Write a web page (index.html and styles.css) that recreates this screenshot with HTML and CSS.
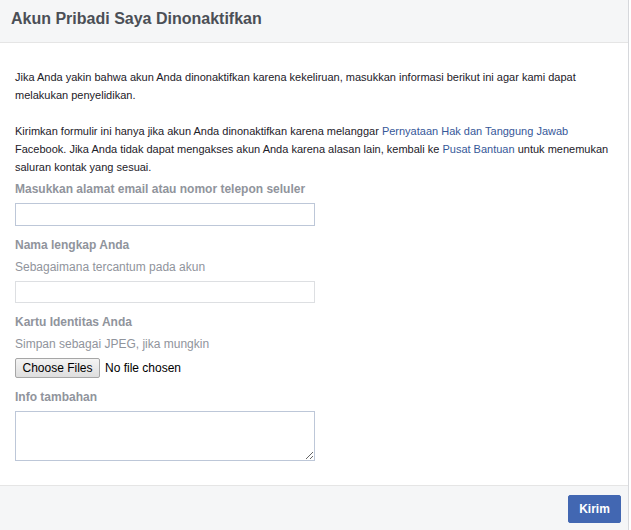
FILE: index.html
```html
<!DOCTYPE html>
<html lang="id">
<head>
<meta charset="utf-8">
<title>Akun Pribadi Saya Dinonaktifkan</title>
<link rel="stylesheet" href="styles.css">
</head>
<body>
<div class="dialog">
  <div class="dialog-header">
    <h2 class="dialog-title">Akun Pribadi Saya Dinonaktifkan</h2>
  </div>
  <div class="dialog-body">
    <p class="intro">Jika Anda yakin bahwa akun Anda dinonaktifkan karena kekeliruan, masukkan informasi berikut ini agar kami dapat melakukan penyelidikan.</p>
    <p class="intro intro-last">Kirimkan formulir ini hanya jika akun Anda dinonaktifkan karena melanggar <a class="link" href="#">Pernyataan Hak dan Tanggung Jawab</a> Facebook. Jika Anda tidak dapat mengakses akun Anda karena alasan lain, kembali ke <a class="link" href="#">Pusat Bantuan</a> untuk menemukan saluran kontak yang sesuai.</p>

    <div class="field">
      <label class="field-label">Masukkan alamat email atau nomor telepon seluler</label>
      <input class="text-input" type="text">
    </div>

    <div class="field">
      <label class="field-label">Nama lengkap Anda</label>
      <div class="field-hint">Sebagaimana tercantum pada akun</div>
      <input class="text-input text-input-light" type="text">
    </div>

    <div class="field">
      <label class="field-label">Kartu Identitas Anda</label>
      <div class="field-hint">Simpan sebagai JPEG, jika mungkin</div>
      <div class="file-row">
        <button class="file-button" type="button">Choose Files</button>
        <span class="file-status">No file chosen</span>
      </div>
    </div>

    <div class="field field-last">
      <label class="field-label">Info tambahan</label>
      <textarea class="text-area"></textarea>
    </div>
  </div>
  <div class="dialog-footer">
    <button class="submit-button" type="button">Kirim</button>
  </div>
</div>
</body>
</html>
```
FILE: styles.css
```css
html, body {
  margin: 0;
  padding: 0;
  background: #ffffff;
}

body {
  font-family: "Liberation Sans", Arial, Helvetica, sans-serif;
  font-size: 12px;
  color: #1d2129;
}

.dialog {
  width: 628px;
  height: 530px;
  border-right: 1px solid #d6d8dc;
  display: flex;
  flex-direction: column;
  box-sizing: content-box;
}

.dialog-header {
  height: 43px;
  box-sizing: border-box;
  background: #f5f6f7;
  border-bottom: 1px solid #e5e5e5;
  padding: 9px 11px 0;
}

.dialog-title {
  margin: 0;
  font-size: 16px;
  line-height: 19px;
  font-weight: bold;
  color: #4b4f56;
}

.dialog-body {
  flex: 1;
  padding: 25px 15px 0;
}

.intro {
  margin: 0 0 18px;
  font-size: 11px;
  line-height: 18px;
}

.intro-last {
  margin-bottom: 4px;
}

.link {
  color: #365899;
  text-decoration: none;
}

.field {
  display: flex;
  flex-direction: column;
  align-items: flex-start;
  margin-bottom: 10px;
}

.field-last {
  margin-bottom: 0;
}

.field-label {
  font-weight: bold;
  color: #90949c;
  line-height: 18px;
  margin-bottom: 5px;
}

.field-hint {
  color: #90949c;
  line-height: 18px;
  margin-top: -1px;
  margin-bottom: 5px;
}

.text-input {
  width: 300px;
  height: 23px;
  box-sizing: border-box;
  margin: 0;
  border: 1px solid #bdc7d8;
  padding: 3px;
  font-family: inherit;
  font-size: 12px;
  background: #fff;
}

.text-input-light {
  height: 22px;
  border-color: #dddfe2;
}

.file-row {
  display: flex;
  align-items: center;
  gap: 5px;
}

.file-button {
  height: 20px;
  width: 85px;
  box-sizing: border-box;
  margin: 0;
  padding: 0 6px;
  font-family: inherit;
  font-size: 12px;
  color: #000;
  border: 1px solid #a6a6a6;
  border-radius: 2px;
  background: linear-gradient(#f4f4f4, #dedede);
}

.file-status {
  font-size: 12px;
  color: #000;
}

.text-area {
  width: 300px;
  height: 50px;
  box-sizing: border-box;
  margin: 0;
  border: 1px solid #bdc7d8;
  padding: 3px;
  font-family: inherit;
  font-size: 12px;
  resize: both;
}

.dialog-footer {
  height: 45px;
  box-sizing: border-box;
  background: #f5f6f7;
  border-top: 1px solid #e5e5e5;
  display: flex;
  align-items: center;
  justify-content: flex-end;
  padding: 1px 7px 0 0;
}

.submit-button {
  height: 28px;
  width: 53px;
  box-sizing: border-box;
  margin: 0;
  padding: 0;
  font-family: inherit;
  font-size: 12px;
  font-weight: bold;
  color: #fff;
  background: #4267b2;
  border: 1px solid #4267b2;
  border-radius: 2px;
}
```
